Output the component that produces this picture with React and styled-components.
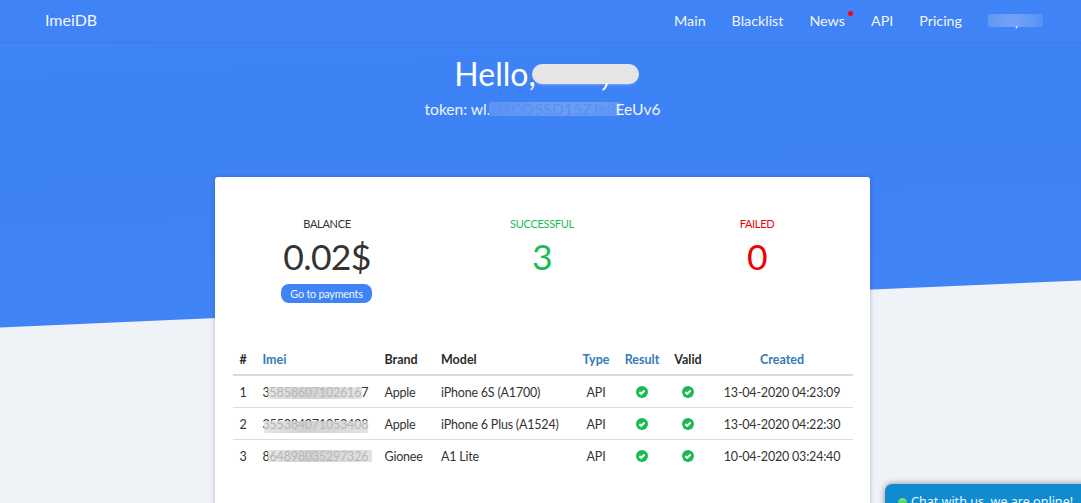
import React from "react";
import styled, { createGlobalStyle } from "styled-components";

const Global = createGlobalStyle`
  * { box-sizing: border-box; }
  html, body { margin: 0; padding: 0; }
  body {
    height: 503px;
    overflow: hidden;
    background: #eff3f8;
    color: #333;
    font-family: Lato, "Open Sans", sans-serif;
    font-size: 13px;
  }
`;

const Page = styled.div`
  position: relative;
  height: 503px;
  overflow: hidden;
`;

const Backdrop = styled.div`
  position: absolute;
  inset: 0 0 auto 0;
  height: 328px;
  background: linear-gradient(177.5deg, #4286f6, #3d83f5 20%, #3e82f4 60%, #4084f6);
  clip-path: polygon(0 0, 100% 0, 100% 280.5px, 0 327.5px);
`;

const Navbar = styled.nav`
  position: relative;
  display: flex;
  justify-content: space-between;
  align-items: center;
  height: 43px;
  padding: 0 38px 2px 45px;
  border-bottom: 1px solid #3b7ae8;
  background: #4083f6;
  color: #f1f6ff;
`;

const Brand = styled.div`
  font-size: 16px;
  line-height: 20px;
`;

const NavLinks = styled.div`
  display: flex;
  align-items: center;
  gap: 26px;
`;

const NavLink = styled.a`
  position: relative;
  top: 0.5px;
  font-size: 14.3px;
  line-height: 20px;
`;

const NewsDot = styled.span`
  position: absolute;
  top: 0.5px;
  right: -8px;
  width: 4.5px;
  height: 4.5px;
  border-radius: 50%;
  background: #f5060f;
`;

const AccountMask = styled.div`
  position: relative;
  width: 55px;
  height: 13px;
  border-radius: 2px;
  background: linear-gradient(90deg, #6096f5, #73a3f8 45%, #699cf7 70%, #548ff6);
  filter: blur(0.6px);
`;

const Tail = styled.svg`
  position: absolute;
  left: ${(p) => p.$left}px;
  top: 100%;
  width: ${(p) => p.$size}px;
  height: ${(p) => p.$size}px;
  margin-top: -1px;
`;

const Hero = styled.header`
  position: relative;
  display: flex;
  flex-direction: column;
  align-items: center;
  height: 134px;
  padding: 11px 0 0 4px;
  color: #fff;
`;

const Greeting = styled.h1`
  display: flex;
  align-items: center;
  margin: 0 0 0 8px;
  font-size: 32px;
  font-weight: 400;
  line-height: 40px;
`;

const NameMask = styled.span`
  position: relative;
  width: 107px;
  height: 20px;
  margin: 0 0 1px -4px;
  border-radius: 10px;
  background: #e5e5e5;
  box-shadow: 0 2px 2px -1px rgba(229, 229, 229, 0.4);
`;

const Token = styled.div`
  display: flex;
  align-items: center;
  height: 24px;
  margin-top: 2.5px;
  font-size: 15.6px;
  color: #edf4ff;
`;

const TokenMask = styled.span`
  width: 131px;
  height: 14px;
  margin: 0 -5px 0 -1px;
  color: #5a90ef;
  background: linear-gradient(90deg, #5c94f4, #6a9df8 50%, #649af7 92%, rgba(119, 167, 249, 0.6));
  font-size: 15.6px;
  letter-spacing: 0.2px;
  line-height: 14px;
  white-space: nowrap;
`;

const Card = styled.main`
  position: relative;
  width: 655px;
  height: 360px;
  margin-left: 215px;
  padding: 40px 4.5px 0;
  border-radius: 3px;
  background: #fff;
  box-shadow: 0 0 4px rgba(45, 60, 90, 0.35);
`;

const Stats = styled.section`
  display: grid;
  grid-template-columns: repeat(3, 215px);
  height: 126px;
`;

const Stat = styled.div`
  display: flex;
  flex-direction: column;
  align-items: center;
  color: ${(p) => p.$color};
`;

const StatLabel = styled.div`
  font-size: 11px;
  letter-spacing: -0.3px;
  line-height: 14px;
  text-transform: uppercase;
`;

const StatValue = styled.div`
  margin: 4px 0 0;
  font-size: 35.6px;
  letter-spacing: -0.7px;
  line-height: 44px;
`;

const PayButton = styled.button`
  width: 91px;
  height: 19px;
  margin: 5px 1px 0 0;
  padding: 1px 0 0;
  border: 0;
  border-radius: 8px;
  background: #4083f6;
  color: #f2f7ff;
  font: 10.8px/18px Lato, sans-serif;
  letter-spacing: -0.22px;
`;

const Table = styled.table`
  width: 620px;
  margin-left: 13.5px;
  table-layout: fixed;
  border-collapse: separate;
  border-spacing: 0;
  font-size: 12.5px;
`;

const HeadCell = styled.th`
  height: 33px;
  padding: 1px 0 0 ${(p) => (p.$center ? 0 : "9.5px")};
  border-bottom: 2px solid #dadada;
  color: ${(p) => (p.$link ? "#337ab7" : "#2b2b2b")};
  text-align: ${(p) => (p.$center ? "center" : "left")};
  font-weight: 700;
`;

const Row = styled.tr`
  &:not(:last-child) td { border-bottom: 1px solid #dddddd; }
`;

const Cell = styled.td`
  height: 32px;
  padding: 1px 0 0 ${(p) => (p.$center ? 0 : "9.5px")};
  text-align: ${(p) => (p.$center ? "center" : "left")};
  letter-spacing: -0.2px;
  white-space: nowrap;
`;

const Imei = styled.div`
  position: relative;
  width: 109px;
`;

const Smudge = styled.span`
  position: absolute;
  left: ${(p) => p.$left}px;
  top: ${(p) => p.$top}px;
  width: ${(p) => p.$width}px;
  height: 12px;
  background: linear-gradient(100deg, rgba(222, 222, 222, 0.75), rgba(202, 202, 202, 0.88) 40%, rgba(220, 220, 220, 0.78));
  filter: blur(0.7px);
`;

const Check = styled.svg`
  display: block;
  width: 12px;
  height: 12px;
  margin: -1px auto 0;
`;

const Chat = styled.aside`
  position: absolute;
  left: 885px;
  top: 484px;
  display: flex;
  align-items: center;
  gap: 4.5px;
  width: 210px;
  height: 36px;
  padding-left: 12.5px;
  border-radius: 7px 7px 0 0;
  background: #108bd0;
  box-shadow: 0 0 6px rgba(0, 0, 0, 0.45);
  color: #eef8ff;
  font: 12.55px/20px "Noto Sans", sans-serif;
  white-space: nowrap;
`;

const Online = styled.span`
  width: 9px;
  height: 9px;
  border-radius: 50%;
  background: linear-gradient(#79e779, #31bf3b);
`;

const StatusIcon = () => (
  <Check viewBox="0 0 12 12">
    <circle cx="6" cy="6" r="6" fill="#19b955" />
    <path d="M3.3 6.1 5.2 7.8 8.6 4.5" fill="none" stroke="#fff" strokeWidth="2.1" />
  </Check>
);

const columns = [
  { title: "#", width: 20, center: true },
  { title: "Imei", width: 122, link: true },
  { title: "Brand", width: 56.5 },
  { title: "Model", width: 141.5 },
  { title: "Type", width: 46, center: true, link: true },
  { title: "Result", width: 46, center: true, link: true },
  { title: "Valid", width: 46, center: true },
  { title: "Created", width: 142, center: true, link: true },
];

const rows = [
  { imei: "358586071026167", brand: "Apple", model: "iPhone 6S (A1700)", created: "13-04-2020 04:23:09", left: 5, top: 2, width: 94 },
  { imei: "355384071053408", brand: "Apple", model: "iPhone 6 Plus (A1524)", created: "13-04-2020 04:22:30", left: 1, top: 4, width: 104 },
  { imei: "864898035297326", brand: "Gionee", model: "A1 Lite", created: "10-04-2020 03:24:40", left: 5, top: 1, width: 104 },
];

export default function App() {
  return (
    <Page>
      <Global />
      <Backdrop />
      <Navbar>
        <Brand>ImeiDB</Brand>
        <NavLinks>
          <NavLink>Main</NavLink>
          <NavLink>Blacklist</NavLink>
          <NavLink>News<NewsDot /></NavLink>
          <NavLink>API</NavLink>
          <NavLink>Pricing</NavLink>
          <AccountMask>
            <Tail $left={27} $size={3} viewBox="0 0 3 3">
              <path d="M2.2 0 1 2.4" stroke="#e8f0ff" strokeWidth="1.2" />
            </Tail>
          </AccountMask>
        </NavLinks>
      </Navbar>
      <Hero>
        <Greeting>
          Hello,
          <NameMask>
            <Tail $left={69} $size={8} viewBox="0 0 8 8">
              <path d="M6.2 0 C5.2 3 4 6.8 1.4 6.8" fill="none" stroke="#fff" strokeWidth="2" />
            </Tail>
          </NameMask>
        </Greeting>
        <Token>token: wl.<TokenMask>JMCO5SD15ZJe8</TokenMask>EeUv6</Token>
      </Hero>
      <Card>
        <Stats>
          <Stat $color="#333">
            <StatLabel>Balance</StatLabel>
            <StatValue>0.02$</StatValue>
            <PayButton>Go to payments</PayButton>
          </Stat>
          <Stat $color="#19bd58">
            <StatLabel>Successful</StatLabel>
            <StatValue>3</StatValue>
          </Stat>
          <Stat $color="#ee0000">
            <StatLabel>Failed</StatLabel>
            <StatValue>0</StatValue>
          </Stat>
        </Stats>
        <Table>
          <colgroup>
            {columns.map((c) => <col key={c.title} width={c.width} />)}
          </colgroup>
          <thead>
            <tr>
              {columns.map((c) => (
                <HeadCell key={c.title} $center={c.center} $link={c.link}>{c.title}</HeadCell>
              ))}
            </tr>
          </thead>
          <tbody>
            {rows.map((r, i) => (
              <Row key={r.imei}>
                <Cell $center>{i + 1}</Cell>
                <Cell><Imei>{r.imei}<Smudge $left={r.left} $top={r.top} $width={r.width} /></Imei></Cell>
                <Cell>{r.brand}</Cell>
                <Cell>{r.model}</Cell>
                <Cell $center>API</Cell>
                <Cell $center><StatusIcon /></Cell>
                <Cell $center><StatusIcon /></Cell>
                <Cell $center>{r.created}</Cell>
              </Row>
            ))}
          </tbody>
        </Table>
      </Card>
      <Chat><Online />Chat with us, we are online!</Chat>
    </Page>
  );
}
